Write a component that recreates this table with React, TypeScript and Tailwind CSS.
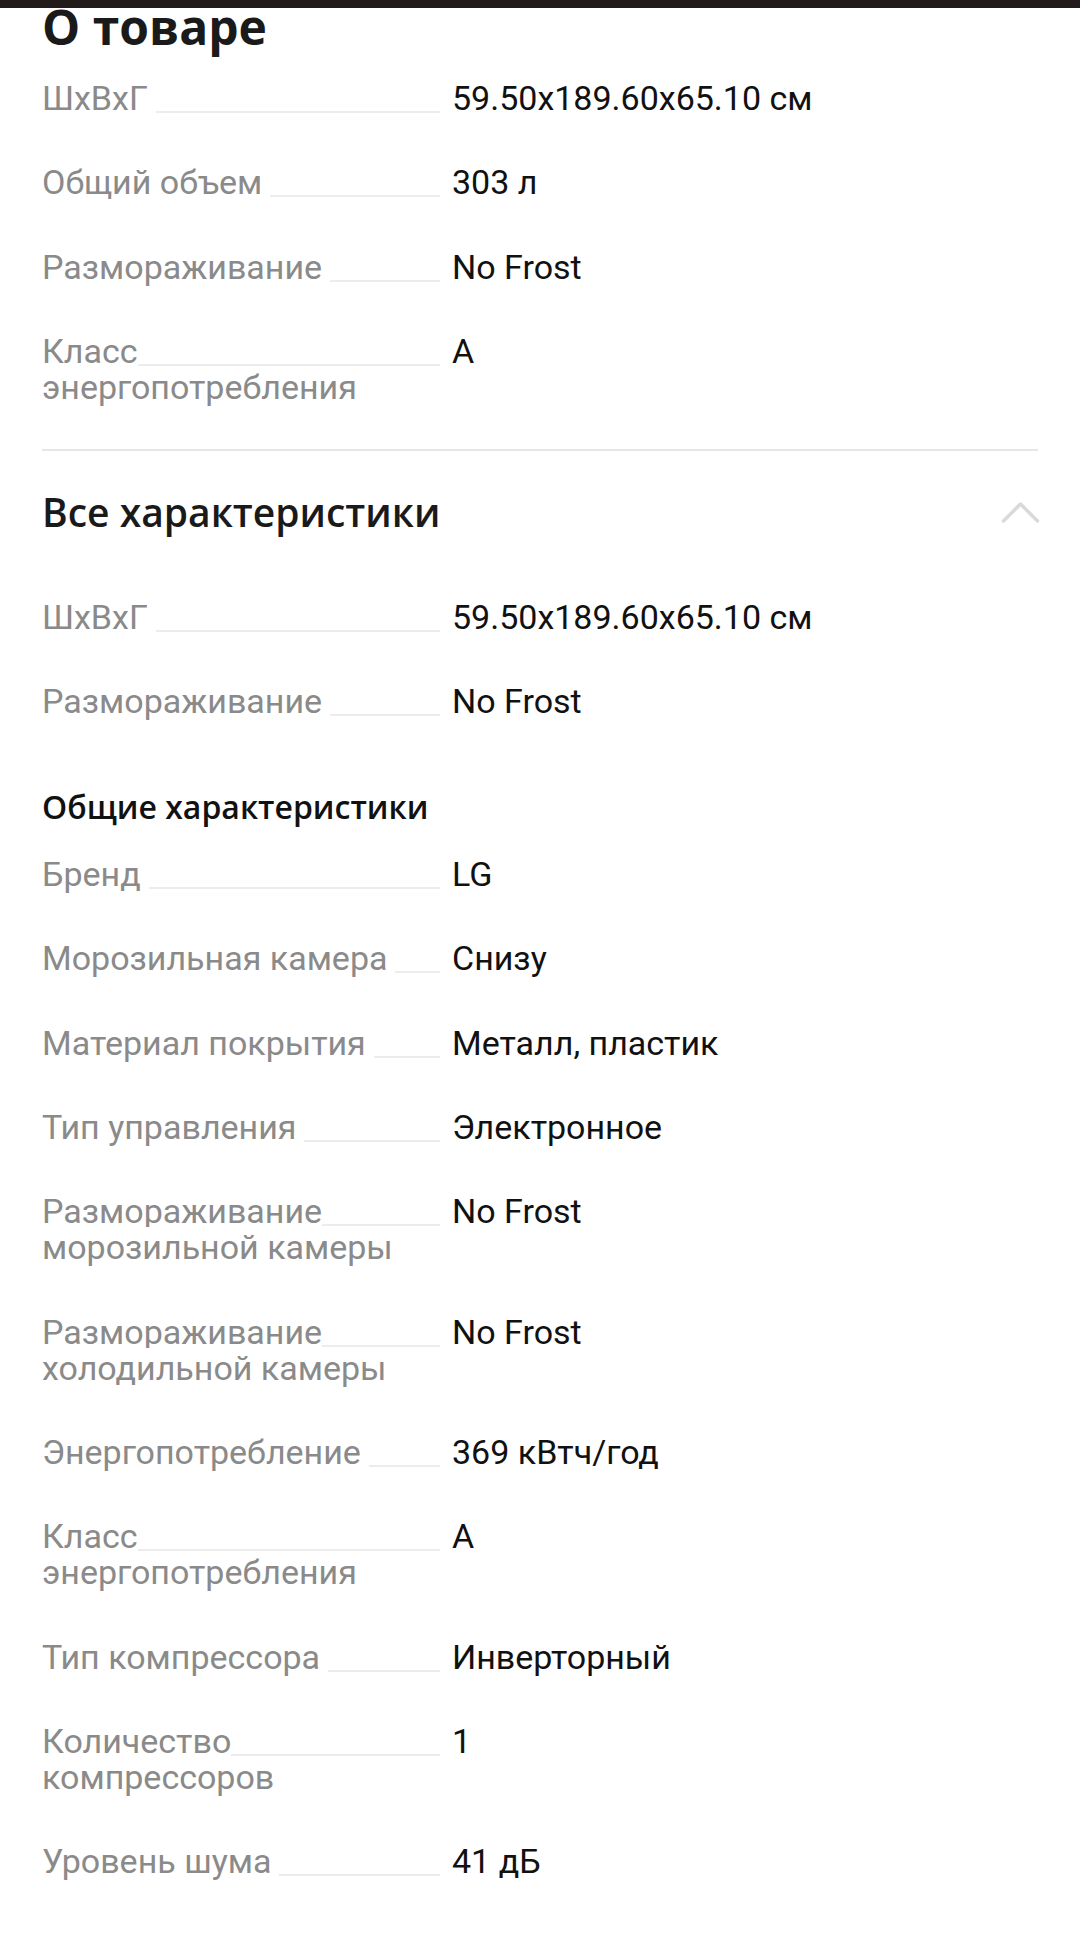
const font = { fontFamily: 'Roboto, "Open Sans", "Liberation Sans", sans-serif' };
const headFont = { fontFamily: '"Open Sans", Roboto, "Liberation Sans", sans-serif' };

type Spec = { label: string; value: string };

const about: Spec[] = [
  { label: 'ШхВхГ', value: '59.50x189.60x65.10 см' },
  { label: 'Общий объем', value: '303 л' },
  { label: 'Размораживание', value: 'No Frost' },
  { label: 'Класс энергопотребления', value: 'A' },
];

const main: Spec[] = [
  { label: 'ШхВхГ', value: '59.50x189.60x65.10 см' },
  { label: 'Размораживание', value: 'No Frost' },
];

const general: Spec[] = [
  { label: 'Бренд', value: 'LG' },
  { label: 'Морозильная камера', value: 'Снизу' },
  { label: 'Материал покрытия', value: 'Металл, пластик' },
  { label: 'Тип управления', value: 'Электронное' },
  { label: 'Размораживание морозильной камеры', value: 'No Frost' },
  { label: 'Размораживание холодильной камеры', value: 'No Frost' },
  { label: 'Энергопотребление', value: '369 кВтч/год' },
  { label: 'Класс энергопотребления', value: 'A' },
  { label: 'Тип компрессора', value: 'Инверторный' },
  { label: 'Количество компрессоров', value: '1' },
  { label: 'Уровень шума', value: '41 дБ' },
];

function SpecRow({ label, value }: Spec) {
  return (
    <div className="flex items-start gap-3 text-[34px] leading-[36px]">
      <div className="w-[398px] shrink-0 text-[#8a8a8a] bg-[linear-gradient(#ececec,#ececec)] bg-no-repeat bg-[length:100%_2px] bg-[position:0_31px]">
        <span className="bg-white pr-2">{label}</span>
      </div>
      <div className="text-[#111111]">{value}</div>
    </div>
  );
}

function SpecList({ items }: { items: Spec[] }) {
  return (
    <div className="flex flex-col gap-[48.3px]">
      {items.map((s, i) => (
        <SpecRow key={i} {...s} />
      ))}
    </div>
  );
}

export default function App() {
  return (
    <div className="w-[1080px] min-h-[1952px] bg-white" style={font}>
      <div className="h-2 bg-[#221b1b]" />
      <div className="px-[42px] pb-16">
        <h1 className="text-[48px] leading-[38px] font-bold text-[#1a1a1a]" style={headFont}>
          О товаре
        </h1>
        <div className="mt-[34px]">
          <SpecList items={about} />
        </div>
        <div className="mt-11 h-[2px] bg-[#e6e6e6]" />
        <div className="mt-[41px] flex items-center justify-between">
          <h2 className="text-[39px] leading-[40px] font-semibold text-[#1a1a1a]" style={headFont}>
            Все характеристики
          </h2>
          <svg width="39" height="24" viewBox="0 0 39 24" fill="none" className="-mr-0.5">
            <polyline points="2.5,21 19.5,4 36.5,21" stroke="#d9d9d9" strokeWidth="3.5" strokeLinecap="round" strokeLinejoin="round" />
          </svg>
        </div>
        <div className="mt-[67px]">
          <SpecList items={main} />
        </div>
        <h3 className="mt-[72px] text-[32px] leading-[32px] font-semibold text-[#111111]" style={headFont}>
          Общие характеристики
        </h3>
        <div className="mt-[33px]">
          <SpecList items={general} />
        </div>
      </div>
    </div>
  );
}
